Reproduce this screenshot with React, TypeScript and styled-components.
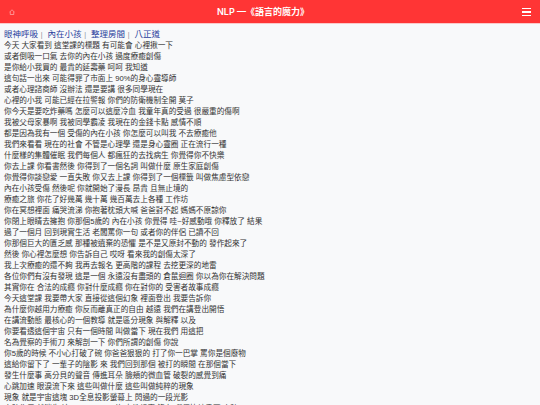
import React from 'react';
import styled, { createGlobalStyle } from 'styled-components';

const links = ['眼神呼吸', '內在小孩', '整理房間', '八正道'];

const lines = [
  '今天 大家看到 這堂課的標題 有可能會 心裡揪一下',
  '或者倒吸一口氣 去你的內在小孩 過度療癒創傷',
  '是你給小我買的 最貴的延壽藥 呵呵 我知道',
  '這句話一出來 可能得罪了市面上 90%的身心靈導師',
  '或者心理諮商師 沒辦法 還是要講 很多同學現在',
  '心裡的小我 可能已經在拉警報 你們的防衛機制全開 莫子',
  '你今天是要吃炸藥嗎 怎麼可以這麼冷血 我童年真的受過 很嚴重的傷啊',
  '我被父母家暴啊 我被同學霸凌 我現在的金錢卡點 感情不順',
  '都是因為我有一個 受傷的內在小孩 你怎麼可以叫我 不去療癒他',
  '我們來看看 現在的社會 不管是心理學 還是身心靈圈 正在流行一種',
  '什麼樣的集體催眠 我們每個人 都瘋狂的去找病生 你覺得你不快樂',
  '你去上課 你看書然後 你得到了一個名詞 叫做什麼 原生家庭創傷',
  '你覺得你談戀愛 一直失敗 你又去上課 你得到了一個標籤 叫做焦慮型依戀',
  '內在小孩受傷 然後呢 你就開始了漫長 昂貴 且無止境的',
  '療癒之旅 你花了好幾萬 幾十萬 幾百萬去上各種 工作坊',
  '你在冥想裡面 痛哭流涕 你抱著枕頭大喊 爸爸對不起 媽媽不原諒你',
  '你閉上眼睛去擁抱 你那個5歲的 內在小孩 你覺得 哇~好感動哦 你釋放了 結果',
  '過了一個月 回到現實生活 老闆罵你一句 或者你的伴侶 已讀不回',
  '你那個巨大的匱乏感 那種被遺棄的恐懼 是不是又原封不動的 發作起來了',
  '然後 你心裡怎麼想 你告訴自己 哎呀 看來我的創傷太深了',
  '我上次療癒的還不夠 我再去報名 更高階的課程 去挖更深的地雷',
  '各位你們有沒有發現 這是一個 永遠沒有盡頭的 倉鼠迴圈 你以為你在解決問題',
  '其實你在 合法的成癮 你對什麼成癮 你在對你的 受害者故事成癮',
  '今天這堂課 我要帶大家 直接從這個幻象 裡面登出 我要告訴你',
  '為什麼你越用力療癒 你反而離真正的自由 越遠 我們在講登出開悟',
  '在講流動態 最核心的一個教導 就是區分現象 與解釋 以及',
  '你要看透這個宇宙 只有一個時間 叫做當下 現在我們 用這把',
  '名為覺察的手術刀 來解剖一下 你們所謂的創傷 你說',
  '你5歲的時候 不小心打破了碗 你爸爸狠狠的 打了你一巴掌 罵你是個廢物',
  '這給你留下了 一輩子的陰影 來 我們回到那個 被打的瞬間 在那個當下',
  '發生什麼事 高分貝的聲音 傳進耳朵 臉頰的微血管 破裂的感覺到痛',
  '心跳加速 眼淚流下來 這些叫做什麼 這些叫做純粹的現象',
  '現象 就是宇宙這塊 3D全息投影螢幕上 閃過的一段光影',
  '十秒作用 就消失 這 100% 100% 的 中性紀實 沒有 哪個比較重要 十秒',
];

export default function App() {
  return (
    <Page>
      <GlobalStyle />
      <TopBar>
        <HomeIcon viewBox="0 0 12 12" aria-hidden="true">
          <path d="M1 6.5 6 1.5l5 5M2.5 5.5V11h7V5.5" />
        </HomeIcon>
        <Title>NLP —《語言的魔力》</Title>
        <MenuIcon aria-hidden="true">
          <span />
          <span />
          <span />
        </MenuIcon>
      </TopBar>
      <Content>
        <LinkRow>
          {links.map((link, index) => (
            <React.Fragment key={link}>
              <TopicLink href="#">{link}</TopicLink>
              {index < links.length - 1 && <Divider>|</Divider>}
            </React.Fragment>
          ))}
        </LinkRow>
        {lines.map((line, index) => (
          <Line key={index}>{line}</Line>
        ))}
      </Content>
    </Page>
  );
}

const GlobalStyle = createGlobalStyle`
  html, body {
    margin: 0;
    height: 100%;
    overflow: hidden;
    background: #f8f9fa;
  }
`;

const Page = styled.div`
  height: 405px;
  overflow: hidden;
  background: #f8f9fa;
  font-family: 'Liberation Sans', 'Noto Sans CJK TC', sans-serif;
`;

const TopBar = styled.header`
  display: flex;
  align-items: center;
  justify-content: space-between;
  height: 23px;
  padding: 0 9px;
  background: #ff3535;
  box-shadow: 0 1px 0 #fbc9c9;
  color: #fff;
`;

const HomeIcon = styled.svg`
  width: 6px;
  height: 6px;
  margin-top: 1px;
  fill: none;
  stroke: #fff;
  stroke-width: 1.1;
  opacity: 0.8;
`;

const Title = styled.h1`
  margin: 0 0 0 -11px;
  font-family: Inter, 'Noto Sans CJK TC', sans-serif;
  font-size: 9px;
  font-weight: 600;
  line-height: 23px;
`;

const MenuIcon = styled.div`
  display: flex;
  flex-direction: column;
  justify-content: space-between;
  width: 9px;
  height: 8px;
  margin-top: 1px;

  span {
    height: 1.4px;
    background: #fff;
  }
`;

const Content = styled.main`
  padding: 5px 4px 0 4px;
  font-size: 7.65px;
  line-height: 11px;
  color: #333;
`;

const LinkRow = styled.nav`
  display: flex;
  align-items: center;
  height: 12px;
  font-size: 8.5px;
`;

const TopicLink = styled.a`
  color: #2a3f9d;
  text-decoration: none;
`;

const Divider = styled.span`
  margin: 0 5px 0 2.7px;
  color: #8a8f98;
  font-size: 7px;
`;

const Line = styled.div`
  white-space: nowrap;
`;
